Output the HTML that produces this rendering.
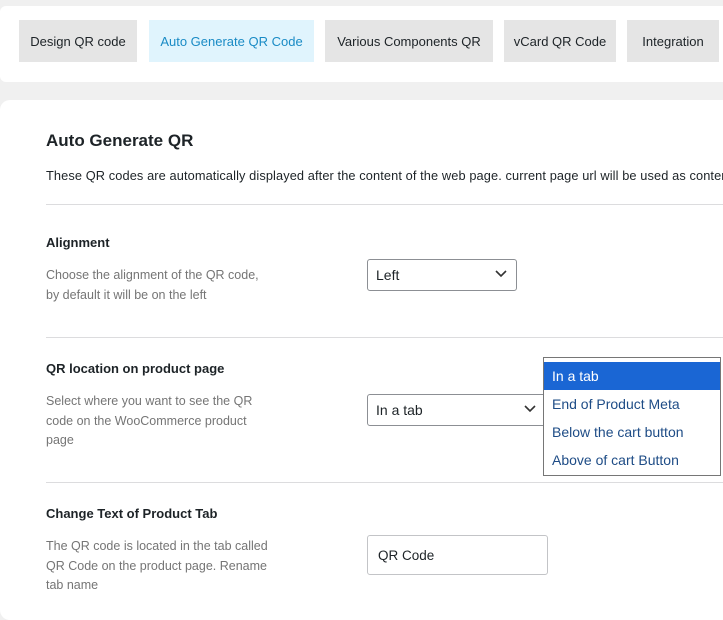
<!DOCTYPE html>
<html><head><style>
*{margin:0;padding:0;box-sizing:border-box}
body{width:723px;height:597px;overflow:hidden;background:#f0f0f0;font-family:"Liberation Sans",sans-serif;position:relative;color:#1d2327}
.card1{position:absolute;left:0;top:6px;width:740px;height:76px;background:#fff;border-radius:6px}
.tab{position:absolute;top:20px;height:42px;line-height:43px;background:#e5e5e5;font-size:13px;text-align:center;color:#1d2327}
.card2{position:absolute;left:0;top:100px;width:760px;height:520px;background:#fff;border-radius:10px}
.a{position:absolute;white-space:nowrap}
.h{font-size:17px;font-weight:bold}
.l{font-size:13px;font-weight:bold}
.d{font-size:12.5px;color:#757575;line-height:19.5px}
.hr{position:absolute;left:46px;right:0;height:1px;background:#dcdcde}
.sel{position:absolute;border:1px solid #8c8f94;border-radius:3px;background:#fff;font-size:14px;padding-left:8px;line-height:30px}
.sel svg{position:absolute;right:9px;top:10px}
.dd{position:absolute;left:543px;top:357px;width:178px;height:119px;background:#fff;border:1px solid #767676;font-size:14px;color:#1e4c86}
.dd div{height:28px;line-height:29px;padding-left:8px}
</style></head><body>
<div class="card1"></div>
<div class="tab" style="left:19px;width:118px">Design QR code</div>
<div class="tab" style="left:149px;width:165px;background:#e0f4fd;color:#1a8bc5">Auto Generate QR Code</div>
<div class="tab" style="left:325px;width:168px">Various Components QR</div>
<div class="tab" style="left:504px;width:112px">vCard QR Code</div>
<div class="tab" style="left:627px;width:92px">Integration</div>
<div class="card2"></div>
<div class="a h" style="left:46px;top:131px">Auto Generate QR</div>
<div class="a" style="left:46px;top:168px;font-size:12.8px;letter-spacing:0.1px">These QR codes are automatically displayed after the content of the web page. current page url will be used as content</div>
<div class="hr" style="top:204px"></div>
<div class="a l" style="left:46px;top:235px">Alignment</div>
<div class="a d" style="left:46px;top:266px">Choose the alignment of the QR code,<br>by default it will be on the left</div>
<div class="sel" style="left:367px;top:259px;width:150px;height:32px">Left<svg width="12" height="8"><path d="M1 1l5 5 5-5" stroke="#333" stroke-width="1.6" fill="none"/></svg></div>
<div class="hr" style="top:337px"></div>
<div class="a l" style="left:46px;top:361px">QR location on product page</div>
<div class="a d" style="left:46px;top:392px">Select where you want to see the QR<br>code on the WooCommerce product<br>page</div>
<div class="sel" style="left:367px;top:394px;width:190px;height:32px">In a tab<svg width="12" height="8" style="right:20px"><path d="M1 1l5 5 5-5" stroke="#333" stroke-width="1.6" fill="none"/></svg></div>
<div class="dd"><div style="height:4px"></div><div style="background:#1a66d4;color:#fff">In a tab</div><div>End of Product Meta</div><div>Below the cart button</div><div>Above of cart Button</div></div>
<div class="hr" style="top:482px"></div>
<div class="a l" style="left:46px;top:506px">Change Text of Product Tab</div>
<div class="a d" style="left:46px;top:537px">The QR code is located in the tab called<br>QR Code on the product page. Rename<br>tab name</div>
<div class="sel" style="left:367px;top:535px;width:181px;height:40px;line-height:39px;border-color:#c3c4c7;font-size:13.5px;padding-left:10px">QR Code</div>
</body></html>
